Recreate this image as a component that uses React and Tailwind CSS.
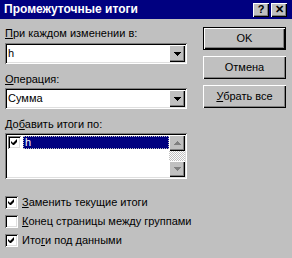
import React from "react"

const sunken =
  "shadow-[inset_1px_1px_0_#808080,inset_-1px_-1px_0_#fff,inset_2px_2px_0_#000,inset_-2px_-2px_0_#dfdfdf]"
const raised =
  "shadow-[inset_1px_1px_0_#fff,inset_-1px_-1px_0_#000,inset_-2px_-2px_0_#808080]"

function Arrow({ disabled, up }) {
  return (
    <svg width="7" height="4" viewBox="0 0 7 4" className={up ? "rotate-180" : ""}>
      <path d="M0 0h7v1H0zM1 1h5v1H1zM2 2h3v1H2zM3 3h1v1H3z" fill={disabled ? "#808080" : "#000"} />
    </svg>
  )
}

function Check() {
  return (
    <svg width="7" height="7" viewBox="0 0 7 7">
      <path d="M6 0v3L3 6H2L0 4V2l2 2z" fill="#000" />
    </svg>
  )
}

function Checkbox({ checked }) {
  return (
    <div className={`w-[13px] h-[13px] bg-white flex items-center justify-center shrink-0 ${sunken}`}>
      {checked && <Check />}
    </div>
  )
}

function Combo({ value }) {
  return (
    <div className={`h-[21px] bg-white flex items-center pl-[3px] pr-[2px] ${sunken}`}>
      <span className="flex-1">{value}</span>
      <div className={`w-[16px] h-[17px] bg-[#c0c0c0] flex items-center justify-center ${raised}`}>
        <Arrow />
      </div>
    </div>
  )
}

function Button({ children, def }) {
  return (
    <div
      className={`h-[23px] flex items-center justify-center bg-[#c0c0c0] ${
        def
          ? "shadow-[inset_0_0_0_1px_#000,inset_2px_2px_0_#fff,inset_-2px_-2px_0_#000,inset_-3px_-3px_0_#808080]"
          : raised
      }`}
    >
      {children}
    </div>
  )
}

export default function App() {
  return (
    <div className="w-[292px] h-[258px] bg-[#c0c0c0] overflow-hidden text-[11px] leading-[13px] text-black font-['Liberation_Sans',Arial,sans-serif]">
      {/* Title bar */}
      <div className="h-[19px] bg-[#000080] flex items-center pl-[4px] pr-[5px]">
        <span className="flex-1 text-white font-bold text-[12px]">Промежуточные итоги</span>
        <div className="flex gap-[2px]">
          <div className={`w-[16px] h-[14px] bg-[#c0c0c0] flex items-center justify-center font-bold text-[11px] ${raised}`}>?</div>
          <div className={`w-[16px] h-[14px] bg-[#c0c0c0] flex items-center justify-center font-bold text-[11px] ${raised}`}>✕</div>
        </div>
      </div>

      <div className="flex px-[5px]">
        {/* Left column */}
        <div className="w-[182px] pt-[8px]">
          <div className="mb-[3px]"><u>П</u>ри каждом изменении в:</div>
          <Combo value="h" />
          <div className="mt-[9px] mb-[2px]"><u>О</u>перация:</div>
          <Combo value="Сумма" />
          <div className="mt-[9px] mb-[2px]">До<u>б</u>авить итоги по:</div>
          <div className={`h-[46px] bg-white flex p-[2px] ${sunken}`}>
            <div className="flex-1 flex items-start pt-[1px] pl-[1px] gap-[2px]">
              <Checkbox checked />
              <div className="flex-1 h-[13px] bg-[#000080] text-white pl-[2px] outline-1 outline-dotted outline-[#c0c0c0] -outline-offset-1 flex items-center">h</div>
            </div>
            <div className="w-[16px] flex flex-col">
              <div className={`h-[16px] bg-[#c0c0c0] flex items-center justify-center ${raised}`}>
                <Arrow up disabled />
              </div>
              <div className="flex-1 bg-[image:repeating-conic-gradient(#fff_0_25%,#c0c0c0_0_50%)] bg-[length:2px_2px]" />
              <div className={`h-[16px] bg-[#c0c0c0] flex items-center justify-center ${raised}`}>
                <Arrow disabled />
              </div>
            </div>
          </div>
        </div>

        {/* Right column */}
        <div className="w-[83px] ml-[16px] pt-[8px] flex flex-col gap-[6px]">
          <Button def>OK</Button>
          <Button>Отмена</Button>
          <Button>
            <span><u>У</u>брать все</span>
          </Button>
        </div>
      </div>

      {/* Bottom checkboxes */}
      <div className="px-[5px] pt-[17px] flex flex-col gap-[6px]">
        <div className="flex items-center gap-[4px]">
          <Checkbox checked />
          <span><u>З</u>аменить текущие итоги</span>
        </div>
        <div className="flex items-center gap-[4px]">
          <Checkbox />
          <span><u>К</u>онец страницы между группами</span>
        </div>
        <div className="flex items-center gap-[4px]">
          <Checkbox checked />
          <span>Ито<u>г</u>и под данными</span>
        </div>
      </div>
    </div>
  )
}
